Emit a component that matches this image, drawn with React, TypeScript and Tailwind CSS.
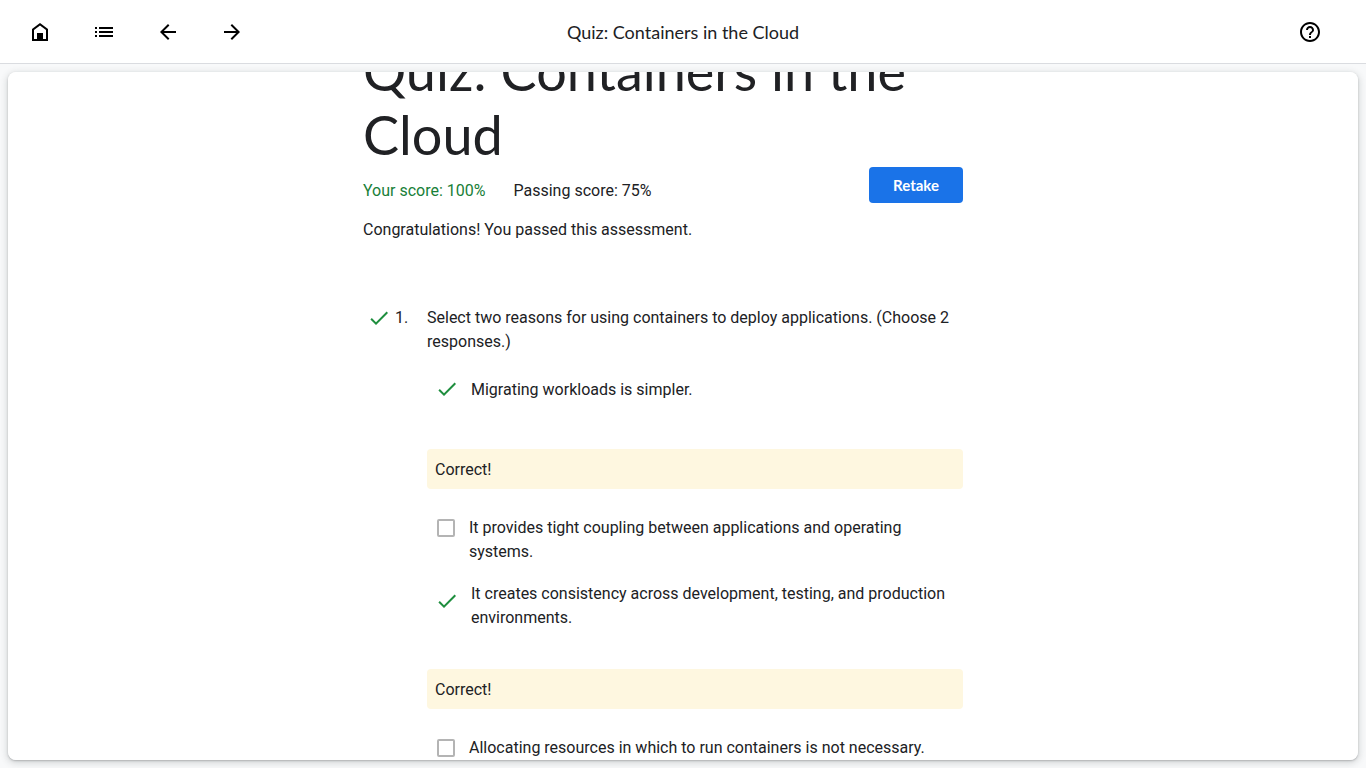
import { useLayoutEffect, useRef } from 'react';
import type { ReactNode } from 'react';

const ICONS = {
  home: 'M12 3 4 9v12h16V9l-8-6Zm0 2.500L6 10v9h3v-6h6v6h3v-9l-6-4.500Z',
  list: 'M3 7h2v2H3zM3 11h2v2H3zM3 15h2v2H3zM7 7h14v2H7zM7 11h14v2H7zM7 15h14v2H7z',
  back: 'M20 11H7.830l5.590-5.590L12 4l-8 8 8 8 1.410-1.410L7.830 13H20v-2z',
  forward: 'M12 4l-1.410 1.410L16.170 11H4v2h12.170l-5.580 5.590L12 20l8-8z',
  help: 'M11 18h2v-2h-2v2zm1-16C6.480 2 2 6.480 2 12s4.480 10 10 10 10-4.480 10-10S17.520 2 12 2zm0 18c-4.410 0-8-3.590-8-8s3.590-8 8-8 8 3.590 8 8-3.590 8-8 8zm0-14c-2.210 0-4 1.790-4 4h2c0-1.100.9-2 2-2s2 .9 2 2c0 2-3 1.750-3 5h2c0-2.250 3-2.500 3-5 0-2.210-1.790-4-4-4z',
  check: 'M9 16.170 4.830 12l-1.420 1.410L9 19 21 7l-1.410-1.410z',
};

function Icon({ name, className = '' }: { name: keyof typeof ICONS; className?: string }) {
  return (
    <svg viewBox="0 0 24 24" className={`size-6 shrink-0 fill-current ${className}`} aria-hidden="true">
      <path fillRule="evenodd" d={ICONS[name]} />
    </svg>
  );
}

function IconButton({ name, label }: { name: keyof typeof ICONS; label: string }) {
  return (
    <button type="button" aria-label={label} className="flex size-12 items-center justify-center rounded-full text-black hover:bg-gray-100">
      <Icon name={name} />
    </button>
  );
}

function CorrectAnswer({ children }: { children: ReactNode }) {
  return (
    <div className="flex items-start gap-1">
      <span className="px-2 pt-[7px] pb-[9px]">
        <Icon name="check" className="text-[#1e8e3e]" />
      </span>
      <p className="self-center">{children}</p>
    </div>
  );
}

function Feedback({ children }: { children: ReactNode }) {
  return <p className="rounded-sm bg-[#fef7e0] px-2 pt-[9px] pb-[7px]">{children}</p>;
}

function Choice({ id, children }: { id: string; children: ReactNode }) {
  return (
    <div className="mt-[27px] flex items-start pl-[10px]">
      <input
        id={id}
        type="checkbox"
        className="mt-[3px] size-[18px] shrink-0 appearance-none rounded-xs border-2 border-[#b4b4b4] bg-white checked:bg-[#1a73e8]"
      />
      <label htmlFor={id} className="pl-[14px]">{children}</label>
    </div>
  );
}

export default function App() {
  const scroller = useRef<HTMLElement>(null);

  useLayoutEffect(() => {
    if (scroller.current) scroller.current.scrollTop = 81;
  }, []);

  return (
    <div className="flex h-screen flex-col bg-[#f8f9fa] font-['Roboto',sans-serif] text-base leading-6 text-[#202124]">
      <header className="grid h-16 shrink-0 grid-cols-[1fr_auto_1fr] items-center border-b border-[#dadce0] bg-white px-4">
        <nav className="flex gap-4">
          <IconButton name="home" label="Home" />
          <IconButton name="list" label="Course outline" />
          <IconButton name="back" label="Previous" />
          <IconButton name="forward" label="Next" />
        </nav>
        <div className="font-['Lato',sans-serif] text-lg leading-6">Quiz: Containers in the Cloud</div>
        <div className="flex justify-end pr-4">
          <IconButton name="help" label="Help" />
        </div>
      </header>

      <div className="flex min-h-0 flex-1 p-2">
        <main
          ref={scroller}
          className="min-w-0 flex-1 overflow-y-auto rounded-lg bg-white shadow-[0_1px_2px_rgba(60,64,67,0.3),0_2px_6px_2px_rgba(60,64,67,0.15)] [scrollbar-width:none]"
        >
          <article className="mx-auto max-w-[640px] pt-12 pr-10 pb-24">
            <h1 className="font-['Lato',sans-serif] text-[54px] leading-[64px]">Quiz: Containers in the Cloud</h1>

            <div className="flex items-end justify-between">
              <div className="flex gap-7">
                <p className="text-[#188038]">Your score: 100%</p>
                <p>Passing score: 75%</p>
              </div>
              <button type="button" className="h-9 rounded-sm bg-[#1a73e8] px-6 font-['Lato',sans-serif] text-[15px] font-bold text-white">
                Retake
              </button>
            </div>
            <p className="mt-[15px]">Congratulations! You passed this assessment.</p>

            <section className="mt-16 flex">
              <div className="flex w-16 shrink-0 items-start gap-1 pl-1">
                <Icon name="check" className="text-[#1e8e3e]" />
                <span>1.</span>
              </div>
              <div className="min-w-0 flex-1">
                <h2>Select two reasons for using containers to deploy applications. (Choose 2 responses.)</h2>
                <div className="mt-4 flex flex-col gap-[39px]">
                  <CorrectAnswer>Migrating workloads is simpler.</CorrectAnswer>
                  <Feedback>Correct!</Feedback>
                </div>
                <Choice id="tight-coupling">It provides tight coupling between applications and operating systems.</Choice>
                <div className="mt-[18px] flex flex-col gap-[39px]">
                  <CorrectAnswer>It creates consistency across development, testing, and production environments.</CorrectAnswer>
                  <Feedback>Correct!</Feedback>
                </div>
                <Choice id="no-allocation">Allocating resources in which to run containers is not necessary.</Choice>
              </div>
            </section>
          </article>
        </main>
      </div>
    </div>
  );
}
